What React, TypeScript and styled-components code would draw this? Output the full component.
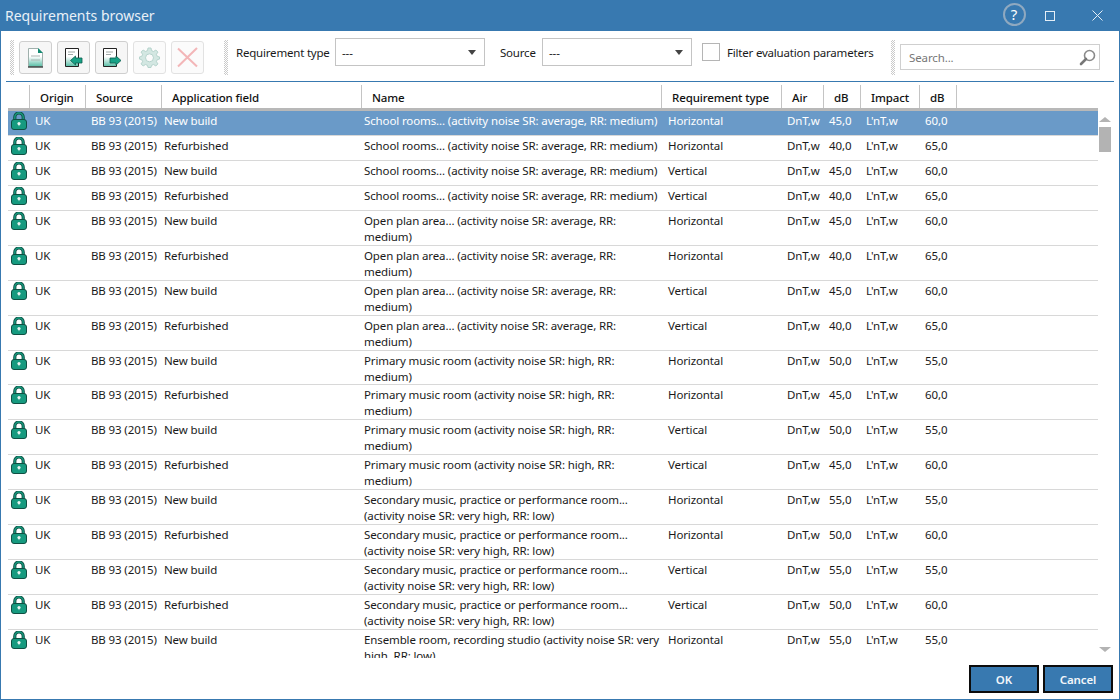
import React from "react";
import styled, { createGlobalStyle } from "styled-components";

const Global = createGlobalStyle`
  html, body { margin: 0; padding: 0; background: #fff; }
  * { box-sizing: border-box; }
`;

const COLUMNS = "22px 56px 76px 200px 300px 120px 42px 37px 59px 37px 1fr";

const Win = styled.div`
  width: 1120px;
  height: 700px;
  display: flex;
  flex-direction: column;
  background: #fff;
  border: 1px solid #3879b0;
  border-top: none;
  font-family: "Noto Sans", "Open Sans", sans-serif;
  font-size: 11.5px;
  letter-spacing: -0.12px;
  color: #1a1a1a;
  overflow: hidden;
`;

const TitleBar = styled.div`
  height: 31px;
  flex: none;
  margin: 0 -1px;
  padding-left: 5px;
  display: flex;
  align-items: center;
  background: #3879b0;
  color: #e8f0f7;
`;

const Title = styled.div`
  flex: 1;
  font-size: 14px;
  letter-spacing: 0;
`;

const WinButton = styled.div<{ $w: number }>`
  width: ${(p) => p.$w}px;
  height: 31px;
  display: flex;
  align-items: center;
  justify-content: center;
`;

const HelpCircle = styled.div`
  width: 23px;
  height: 23px;
  margin-bottom: 3px;
  flex: none;
  border: 2px solid #8fa9c0;
  border-radius: 50%;
  display: flex;
  align-items: center;
  justify-content: center;
  color: #fff;
  font-size: 15px;
  line-height: 1;
`;

const Toolbar = styled.div`
  height: 51px;
  flex: none;
  margin: 0 5px;
  padding: 6px 0 0 4px;
  display: flex;
  align-items: flex-start;
  border-bottom: 1px solid #3879b0;
`;

const Grip = styled.div<{ $ml: number; $mr: number }>`
  width: 4px;
  height: 35px;
  margin: 3px ${(p) => p.$mr}px 0 ${(p) => p.$ml}px;
  flex: none;
  background-image: conic-gradient(#cacaca 25%, transparent 0 50%, #cacaca 0 75%, transparent 0);
  background-size: 2px 2px;
`;

const ToolGroup = styled.div`
  display: flex;
  gap: 5px;
  margin-top: 4px;
`;

const ToolButton = styled.div<{ $off?: boolean }>`
  width: 33px;
  height: 33px;
  display: flex;
  align-items: center;
  justify-content: center;
  background: ${(p) => (p.$off ? "#fbfbfb" : "#f6f6f6")};
  border: 1px solid ${(p) => (p.$off ? "#e2e2e2" : "#cfcfcf")};
  border-radius: 3px;
`;

const Label = styled.span<{ $ml: number; $w: number }>`
  width: ${(p) => p.$w}px;
  margin: 8px 0 0 ${(p) => p.$ml}px;
  flex: none;
  white-space: nowrap;
  line-height: 16px;
  letter-spacing: -0.2px;
`;

const Combo = styled.div`
  width: 150px;
  height: 28px;
  margin-top: 1px;
  padding: 0 6px;
  flex: none;
  display: flex;
  align-items: center;
  justify-content: space-between;
  border: 1px solid #c4c4c4;
  background: #fff;
`;

const Caret = styled.span`
  width: 0;
  height: 0;
  margin-right: 2px;
  border-left: 4px solid transparent;
  border-right: 4px solid transparent;
  border-top: 5px solid #444;
`;

const Check = styled.div`
  width: 18px;
  height: 18px;
  margin: 6px 0 0 10px;
  flex: none;
  border: 1px solid #b5b5b5;
  background: #fff;
`;

const SearchBox = styled.div`
  width: 200px;
  height: 26px;
  margin-top: 7px;
  padding: 1px 3px 0 8px;
  flex: none;
  display: flex;
  align-items: center;
  justify-content: space-between;
  border: 1px solid #cfcfcf;
  color: #777;
`;

const Header = styled.div`
  height: 26px;
  flex: none;
  margin: 3px 21px 0 7px;
  display: grid;
  grid-template-columns: ${COLUMNS};
  border-bottom: 3px solid #b8b8b8;
`;

const HeadCell = styled.div`
  height: 23px;
  padding-left: 10px;
  line-height: 25px;
  font-weight: 500;
  color: #111;
  white-space: nowrap;
  border-right: 1px solid #c4c4c4;
`;

const Body = styled.div`
  flex: 1;
  min-height: 0;
  margin: 0 0 0 7px;
  display: flex;
`;

const Rows = styled.div`
  width: 1090px;
  height: 547px;
  overflow: hidden;
`;

const Row = styled.div<{ $h: number; $sel?: boolean }>`
  height: ${(p) => p.$h}px;
  display: grid;
  grid-template-columns: ${COLUMNS};
  background: ${(p) => (p.$sel ? "#6a9ac8" : "#fff")};
  color: ${(p) => (p.$sel ? "#fff" : "#1a1a1a")};
  border-bottom: 1px solid #d8d8d8;
`;

const Cell = styled.div<{ $pl: number }>`
  padding: 2px 0 0 ${(p) => p.$pl}px;
  line-height: 16px;
  white-space: pre;
  overflow: hidden;
`;

const LockCell = styled.div`
  padding: 1px 0 0 3px;
`;

const Scroll = styled.div`
  width: 12px;
  margin-left: 1px;
  height: 547px;
  display: flex;
  flex-direction: column;
  align-items: center;
`;

const ArrowUp = styled.span`
  margin-top: 6px;
  border-left: 6px solid transparent;
  border-right: 6px solid transparent;
  border-bottom: 5px solid #b3b3b3;
`;

const Thumb = styled.div`
  width: 12px;
  height: 25px;
  margin-top: 5px;
  background: #b3b3b3;
`;

const ArrowDown = styled.span`
  margin-top: auto;
  margin-bottom: 6px;
  border-left: 6px solid transparent;
  border-right: 6px solid transparent;
  border-top: 5px solid #b3b3b3;
`;

const Footer = styled.div`
  height: 41px;
  flex: none;
  padding: 7px 6px 0 0;
  display: flex;
  justify-content: flex-end;
  gap: 4px;
`;

const DialogButton = styled.div`
  width: 70px;
  height: 28px;
  display: flex;
  align-items: center;
  justify-content: center;
  background: #3879b0;
  border: 2px solid #0c0c0c;
  color: #f2f6fa;
  font-weight: 600;
`;

const Lock = () => (
  <svg width="16" height="18" viewBox="0 0 16 18">
    <path d="M3.8 9V5.2a4.2 4.2 0 0 1 8.4 0V9" fill="none" stroke="#0f4f42" strokeWidth="3.2" />
    <path d="M3.8 9V5.2a4.2 4.2 0 0 1 8.4 0V9" fill="none" stroke="#169a7f" strokeWidth="1.4" />
    <rect x="0.5" y="7.5" width="15" height="10" rx="2.5" fill="#169a7f" stroke="#0f4f42" />
    <circle cx="8" cy="11.5" r="1.6" fill="#e9f5f2" />
    <path d="M7.2 12H8.8L8 14.6Z" fill="#e9f5f2" />
  </svg>
);

const DocDefs = () => (
  <defs>
    <linearGradient id="docFill" x1="0" y1="0" x2="0" y2="1">
      <stop offset="0.45" stopColor="#ffffff" />
      <stop offset="1" stopColor="#58bda5" />
    </linearGradient>
  </defs>
);

const NewDoc = () => (
  <svg width="17" height="21" viewBox="0 0 17 21">
    <DocDefs />
    <path d="M1.5 1.5H11L15.5 6V19.5H1.5Z" fill="url(#docFill)" stroke="#9fb0ac" strokeWidth="1" />
    <path d="M11 1L16 6H11Z" fill="#138a72" />
    <path d="M4 9H13M4 13H13" stroke="#a9b5b2" strokeWidth="1" />
    <path d="M1 20H16" stroke="#1c2624" strokeWidth="1.2" />
  </svg>
);

const ImportDoc = () => (
  <svg width="20" height="21" viewBox="0 0 20 21">
    <path d="M1.5 1.5H14.5V19.5H1.5Z" fill="url(#docFill)" stroke="#222" strokeWidth="1" />
    <path d="M4 5H11M4 7.5H9" stroke="#a0a8a6" strokeWidth="1" />
    <path d="M6.5 13.5L11.5 9V11H18V16H11.5V18Z" fill="#17a286" stroke="#0e5e4e" strokeWidth="0.8" />
  </svg>
);

const ExportDoc = () => (
  <svg width="20" height="21" viewBox="0 0 20 21">
    <path d="M1.5 1.5H14.5V19.5H1.5Z" fill="url(#docFill)" stroke="#222" strokeWidth="1" />
    <path d="M4 5H11M4 7.5H9" stroke="#a0a8a6" strokeWidth="1" />
    <path d="M19 13.5L14 9V11H8V16H14V18Z" fill="#17a286" stroke="#0e5e4e" strokeWidth="0.8" />
  </svg>
);

const Gear = () => (
  <svg width="21" height="21" viewBox="0 0 21 21">
    <path
      d="M9 1H12L12.5 3.6L14.6 4.5L16.8 3L18.9 5.1L17.4 7.3L18.3 9.4L20.5 9.9V12.1L18.3 12.6L17.4 14.7L18.9 16.9L16.8 19L14.6 17.5L12.5 18.4L12 20.5H9L8.5 18.4L6.4 17.5L4.2 19L2.1 16.9L3.6 14.7L2.7 12.6L0.5 12.1V9.9L2.7 9.4L3.6 7.3L2.1 5.1L4.2 3L6.4 4.5L8.5 3.6Z"
      fill="#d3e7e2"
      stroke="#b5d3cc"
    />
    <circle cx="10.5" cy="10.8" r="4" fill="#fbfbfb" stroke="#b5d3cc" />
  </svg>
);

const Cross = () => (
  <svg width="21" height="21" viewBox="0 0 21 21">
    <path d="M1 1.5L20 19.5M20 1L1 19.5" stroke="#f3b6b8" strokeWidth="2" />
  </svg>
);

const Magnifier = () => (
  <svg width="17" height="17" viewBox="0 0 17 17">
    <circle cx="10.5" cy="6.5" r="5" fill="none" stroke="#8a8a8a" strokeWidth="1.6" />
    <path d="M7 10L2 15" stroke="#777" strokeWidth="2.6" strokeLinecap="round" />
  </svg>
);

const Maximize = () => (
  <svg width="10" height="10" viewBox="0 0 10 10">
    <rect x="0.5" y="0.5" width="9" height="9" fill="none" stroke="#e4eef6" />
  </svg>
);

const CloseX = () => (
  <svg width="11" height="11" viewBox="0 0 11 11">
    <path d="M0.5 0.5L10.5 10.5M10.5 0.5L0.5 10.5" stroke="#e4eef6" strokeWidth="1" />
  </svg>
);

type Item = { field: string; name: string; type: string; air: string; imp: string; h: number };

const fourOf = (name: string, h: number, a: string, b: string, c: string, d: string): Item[] => [
  { field: "New build", name, type: "Horizontal", air: a, imp: c, h },
  { field: "Refurbished", name, type: "Horizontal", air: b, imp: d, h },
  { field: "New build", name, type: "Vertical", air: a, imp: c, h },
  { field: "Refurbished", name, type: "Vertical", air: b, imp: d, h },
];

const rows: Item[] = [
  ...fourOf("School rooms... (activity noise SR: average, RR: medium)", 25, "45,0", "40,0", "60,0", "65,0"),
  ...fourOf("Open plan area... (activity noise SR: average, RR:\nmedium)", 34.9, "45,0", "40,0", "60,0", "65,0"),
  ...fourOf("Primary music room (activity noise SR: high, RR:\nmedium)", 34.9, "50,0", "45,0", "55,0", "60,0"),
  ...fourOf("Secondary music, practice or performance room...\n(activity noise SR: very high, RR: low)", 34.9, "55,0", "50,0", "55,0", "60,0"),
  { field: "New build", name: "Ensemble room, recording studio (activity noise SR: very\nhigh, RR: low)", type: "Horizontal", air: "55,0", imp: "55,0", h: 34.9 },
];

const heads = ["", "Origin", "Source", "Application field", "Name", "Requirement type", "Air", "dB", "Impact", "dB"];

export default function App() {
  return (
    <Win>
      <Global />
      <TitleBar>
        <Title>Requirements browser</Title>
        <WinButton $w={24}>
          <HelpCircle>?</HelpCircle>
        </WinButton>
        <WinButton $w={48}>
          <Maximize />
        </WinButton>
        <WinButton $w={46}>
          <CloseX />
        </WinButton>
      </TitleBar>

      <Toolbar>
        <Grip $ml={0} $mr={5} />
        <ToolGroup>
          <ToolButton><NewDoc /></ToolButton>
          <ToolButton><ImportDoc /></ToolButton>
          <ToolButton><ExportDoc /></ToolButton>
          <ToolButton $off><Gear /></ToolButton>
          <ToolButton $off><Cross /></ToolButton>
        </ToolGroup>
        <Grip $ml={20} $mr={8} />
        <Label $ml={0} $w={99}>Requirement type</Label>
        <Combo>---<Caret /></Combo>
        <Label $ml={15} $w={42}>Source</Label>
        <Combo>---<Caret /></Combo>
        <Check />
        <Label $ml={7} $w={146}>Filter evaluation parameters</Label>
        <Grip $ml={18} $mr={5} />
        <SearchBox>Search...<Magnifier /></SearchBox>
      </Toolbar>

      <Header>
        {heads.map((h, i) => (
          <HeadCell key={i}>{h}</HeadCell>
        ))}
        <div />
      </Header>

      <Body>
        <Rows>
          {rows.map((r, i) => (
            <Row key={i} $h={r.h} $sel={i === 0}>
              <LockCell><Lock /></LockCell>
              <Cell $pl={5}>UK</Cell>
              <Cell $pl={5}>BB 93 (2015)</Cell>
              <Cell $pl={2}>{r.field}</Cell>
              <Cell $pl={2}>{r.name}</Cell>
              <Cell $pl={6}>{r.type}</Cell>
              <Cell $pl={5}>DnT,w</Cell>
              <Cell $pl={5}>{r.air}</Cell>
              <Cell $pl={5}>L'nT,w</Cell>
              <Cell $pl={5}>{r.imp}</Cell>
              <div />
            </Row>
          ))}
        </Rows>
        <Scroll>
          <ArrowUp />
          <Thumb />
          <ArrowDown />
        </Scroll>
      </Body>

      <Footer>
        <DialogButton>OK</DialogButton>
        <DialogButton>Cancel</DialogButton>
      </Footer>
    </Win>
  );
}
